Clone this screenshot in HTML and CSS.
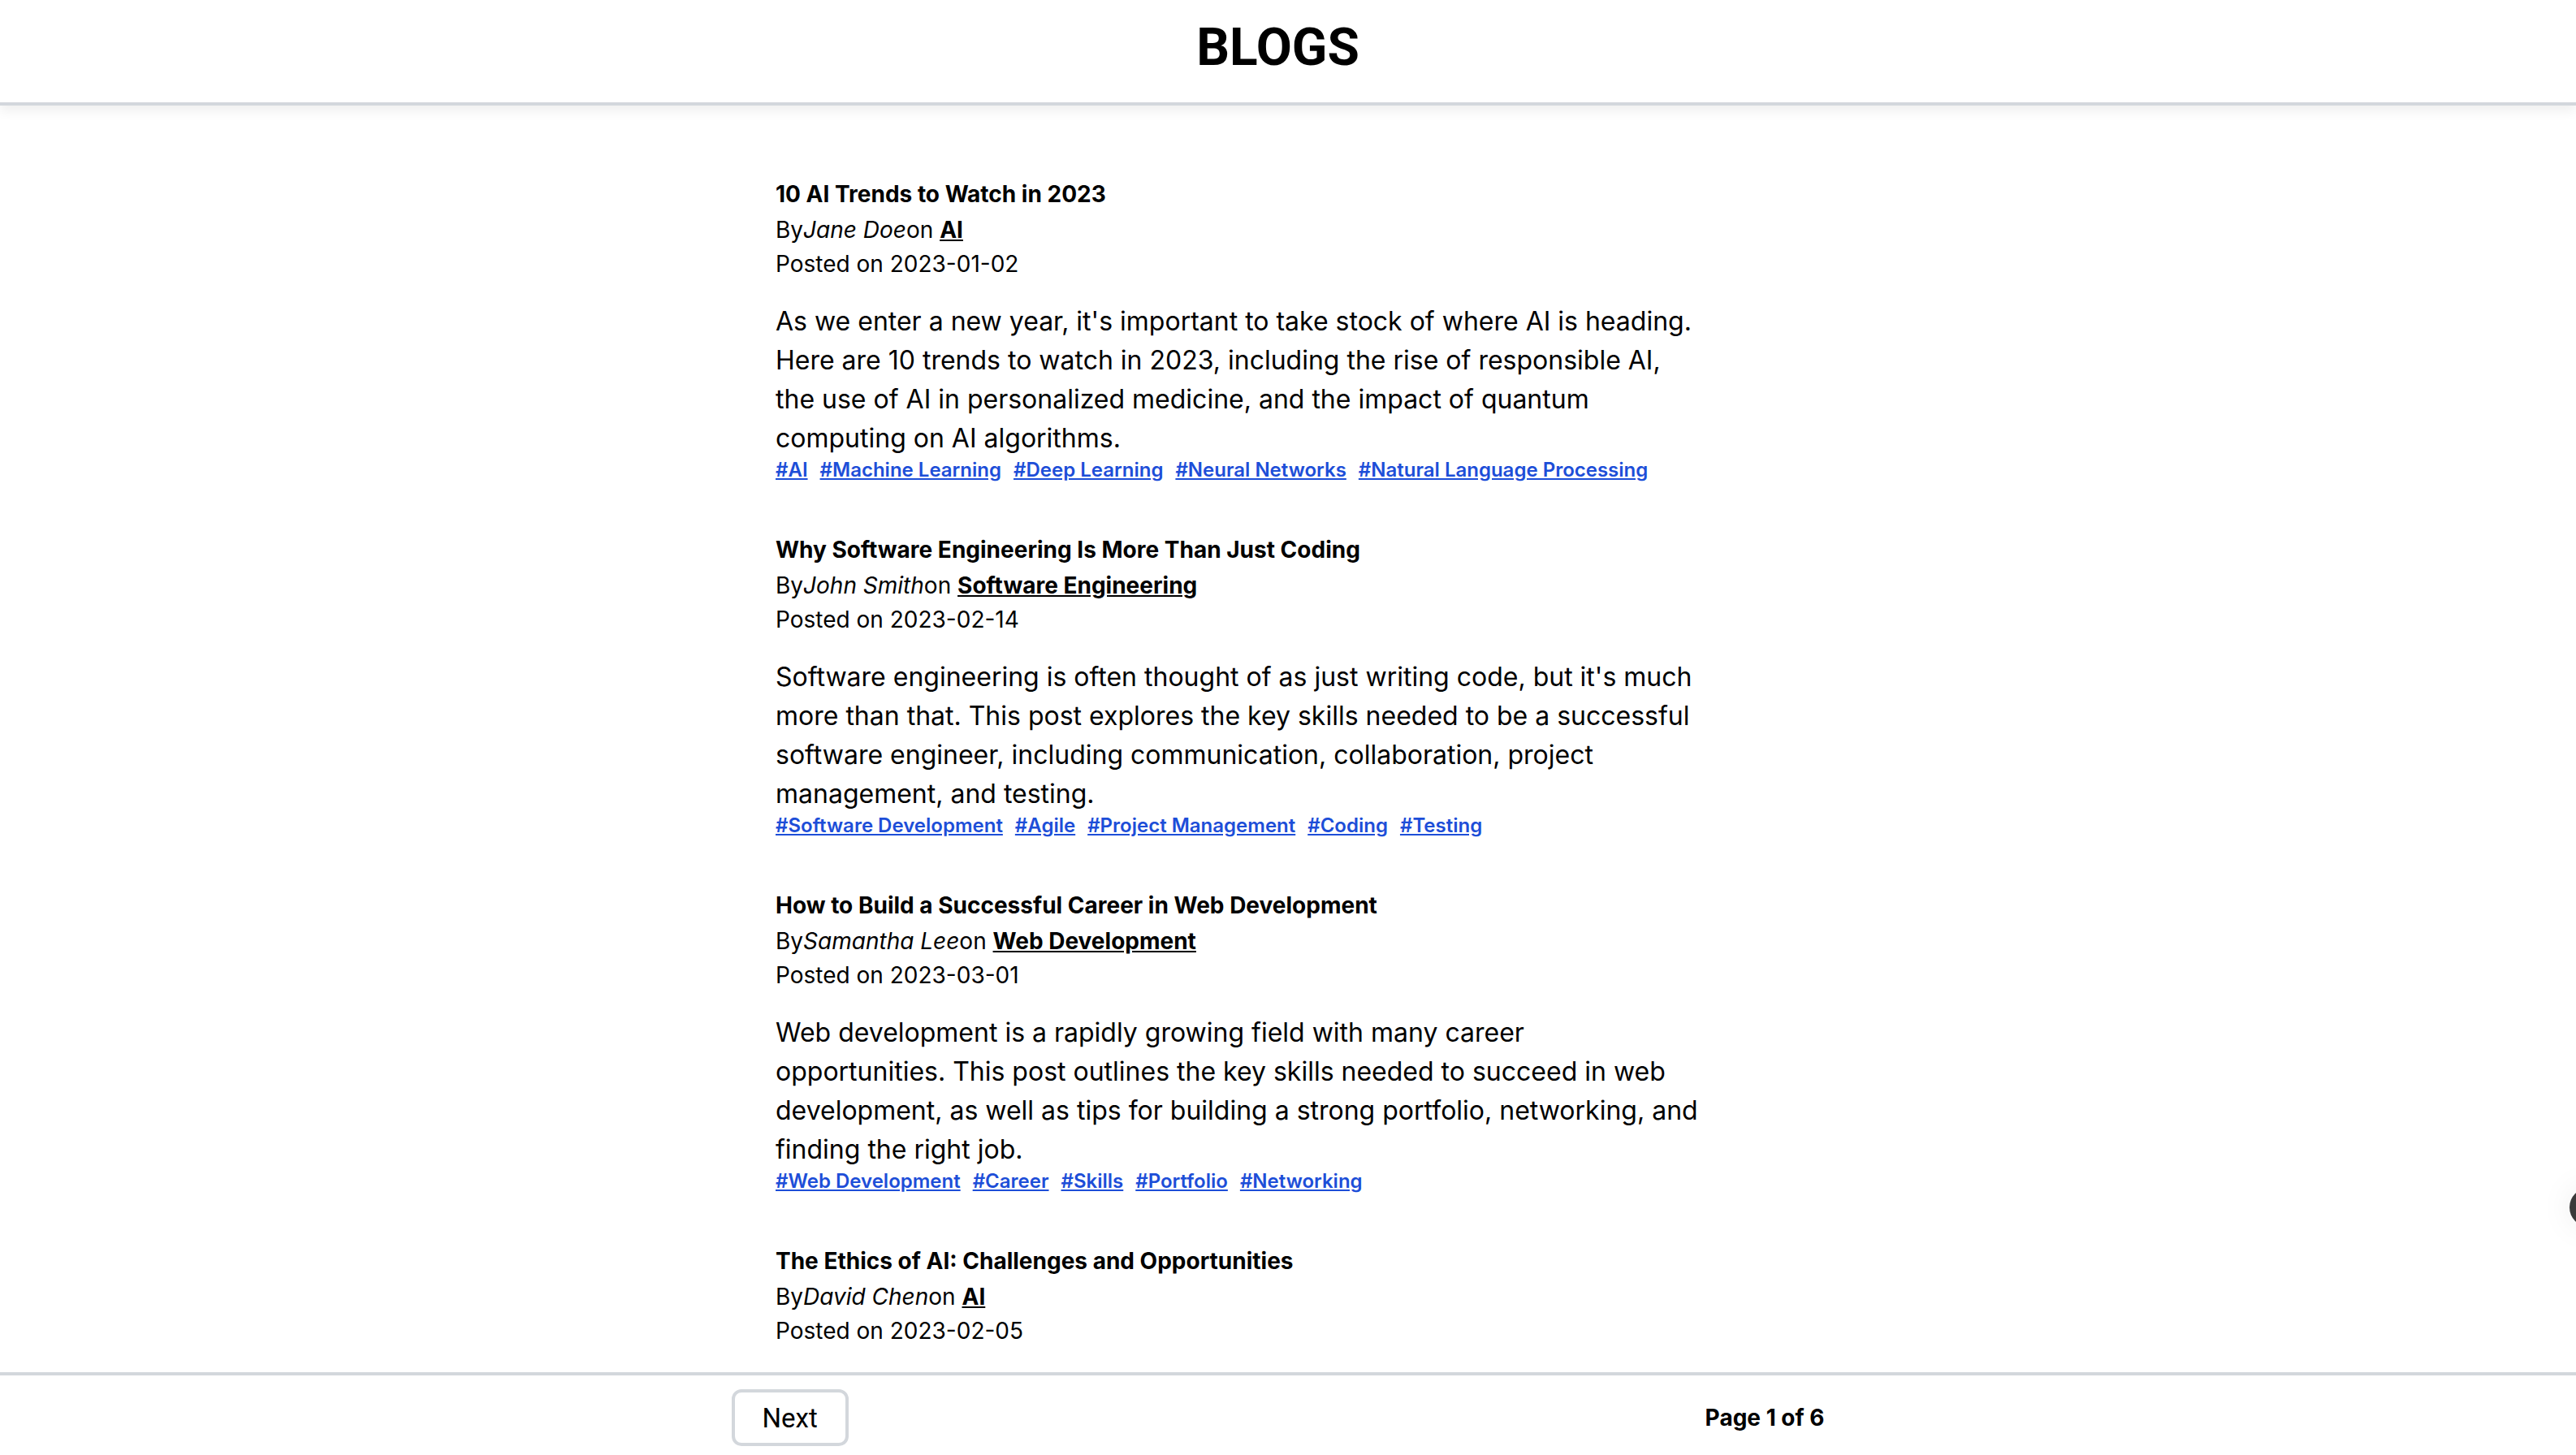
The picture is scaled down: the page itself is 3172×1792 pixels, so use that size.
FILE: index.html
```html
<!DOCTYPE html>
<html lang="en">
<head>
<meta charset="utf-8">
<title>Blogs</title>
<link rel="stylesheet" href="styles.css">
</head>
<body>
<header class="site-header">
  <h1 class="site-title">BLOGS</h1>
</header>
<main class="feed">
  <div class="feed-inner">
    <article class="post">
      <h2 class="post-title">10 AI Trends to Watch in 2023</h2>
      <p class="post-meta">By<em>Jane Doe</em>on <a class="post-cat" href="#">AI</a></p>
      <p class="post-meta">Posted on 2023-01-02</p>
      <p class="post-body">As we enter a new year, it's important to take stock of where AI is heading. Here are 10 trends to watch in 2023, including the rise of responsible AI, the use of AI in personalized medicine, and the impact of quantum computing on AI algorithms.</p>
      <div class="post-tags">
        <a href="#">#AI</a><a href="#">#Machine Learning</a><a href="#">#Deep Learning</a><a href="#">#Neural Networks</a><a href="#">#Natural Language Processing</a>
      </div>
    </article>
    <article class="post">
      <h2 class="post-title">Why Software Engineering Is More Than Just Coding</h2>
      <p class="post-meta">By<em>John Smith</em>on <a class="post-cat" href="#">Software Engineering</a></p>
      <p class="post-meta">Posted on 2023-02-14</p>
      <p class="post-body">Software engineering is often thought of as just writing code, but it's much more than that. This post explores the key skills needed to be a successful software engineer, including communication, collaboration, project management, and testing.</p>
      <div class="post-tags">
        <a href="#">#Software Development</a><a href="#">#Agile</a><a href="#">#Project Management</a><a href="#">#Coding</a><a href="#">#Testing</a>
      </div>
    </article>
    <article class="post">
      <h2 class="post-title">How to Build a Successful Career in Web Development</h2>
      <p class="post-meta">By<em>Samantha Lee</em>on <a class="post-cat" href="#">Web Development</a></p>
      <p class="post-meta">Posted on 2023-03-01</p>
      <p class="post-body">Web development is a rapidly growing field with many career opportunities. This post outlines the key skills needed to succeed in web development, as well as tips for building a strong portfolio, networking, and finding the right job.</p>
      <div class="post-tags">
        <a href="#">#Web Development</a><a href="#">#Career</a><a href="#">#Skills</a><a href="#">#Portfolio</a><a href="#">#Networking</a>
      </div>
    </article>
    <article class="post">
      <h2 class="post-title">The Ethics of AI: Challenges and Opportunities</h2>
      <p class="post-meta">By<em>David Chen</em>on <a class="post-cat" href="#">AI</a></p>
      <p class="post-meta">Posted on 2023-02-05</p>
    </article>
  </div>
</main>
<footer class="pager">
  <div class="pager-inner">
    <button class="pager-btn" type="button">Next</button>
    <span class="pager-status">Page 1 of 6</span>
  </div>
</footer>
<div class="float-btn"></div>
</body>
</html>
```

FILE: styles.css
```css
html, body {
  margin: 0;
  padding: 0;
  height: 100%;
}
body {
  display: flex;
  flex-direction: column;
  height: 100vh;
  overflow: hidden;
  background: #fff;
  color: #000;
  font-family: "Inter", "Noto Sans", sans-serif;
}
.site-header {
  flex: none;
  height: 126px;
  box-sizing: content-box;
  border-bottom: 4px solid #d3d7dc;
  box-shadow: 0 6px 14px rgba(0, 0, 0, 0.07);
  display: flex;
  align-items: center;
  justify-content: center;
  padding: 0 25px 0 0;
  position: relative;
  z-index: 2;
  background: #fff;
}
.site-title {
  margin: 0 0 9px 0;
  font-family: "Roboto", "Liberation Sans", sans-serif;
  font-weight: 700;
  font-size: 64px;
  line-height: 1;
}
.feed {
  flex: 1;
  overflow: hidden;
  padding: 86px 25px 0 0;
}
.feed-inner {
  width: 1237px;
  margin: 0 auto;
}
.post {
  max-width: 1137px;
  margin-bottom: 60px;
}
.post-title {
  margin: 0;
  font-size: 28px;
  font-weight: 700;
  line-height: 46px;
}
.post-meta {
  margin: 0;
  font-size: 28px;
  line-height: 42px;
}
.post-meta em {
  font-style: italic;
}
.post-cat {
  color: #000;
  font-weight: 700;
  text-decoration: underline;
}
.post-body {
  margin: 26px 0 0 0;
  font-size: 32px;
  line-height: 48px;
}
.post-tags {
  display: flex;
  flex-wrap: wrap;
  gap: 0 15px;
  line-height: 30px;
}
.post-tags a {
  font-size: 24px;
  font-weight: 600;
  color: #1d4ed8;
  text-decoration: underline;
}
.pager {
  flex: none;
  border-top: 4px solid #d3d7dc;
  padding: 17px 25px 11px 0;
  background: #fff;
}
.pager-inner {
  width: 1346px;
  margin: 0 auto;
  display: flex;
  align-items: center;
  justify-content: space-between;
}
.pager-btn {
  height: 70px;
  padding: 0 34px;
  border: 4px solid #d3d7dc;
  border-radius: 12px;
  background: #fff;
  color: #000;
  font-family: "Roboto", "Liberation Sans", sans-serif;
  font-size: 33px;
}
.pager-status {
  font-size: 28px;
  font-weight: 700;
}
.float-btn {
  position: fixed;
  top: 1463px;
  left: 3164px;
  width: 48px;
  height: 48px;
  border-radius: 50%;
  background: #3a3a3a;
  box-shadow: 0 0 40px rgba(0, 0, 0, 0.08);
}
```
